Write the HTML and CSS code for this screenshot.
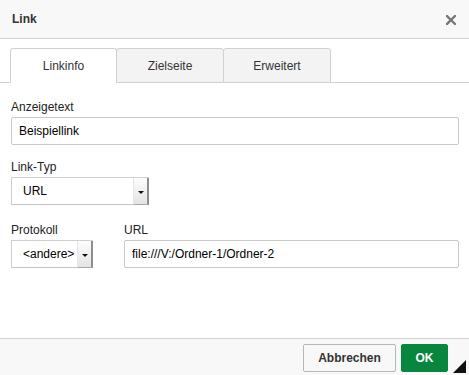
FILE: index.html
```html
<!DOCTYPE html>
<html>
<head>
<meta charset="utf-8">
<title>Link</title>
<link rel="stylesheet" href="styles.css">
</head>
<body>

<!-- ====================================================== -->
<div class="dialog">

<div class="dialog-head">
    <span class="dialog-title">Link</span>
    <span class="dialog-close">
        <svg width="10" height="10" viewBox="0 0 10 10">
            <path d="M1 1 L9 9 M9 1 L1 9" stroke="#777" stroke-width="2.4" stroke-linecap="square"/>
        </svg>
    </span>
</div>

<!-- ====================================================== -->
<div class="tab-bar">
    <div class="tab tab-active">Linkinfo</div>
    <div class="tab">Zielseite</div>
    <div class="tab">Erweitert</div>
</div>

<!-- ====================================================== -->
<div class="dialog-body">

    <div class="field field-first">
        <div class="field-label">Anzeigetext</div>
        <div class="text-input text-input-full">Beispiellink</div>
    </div>

    <div class="field">
        <div class="field-label">Link-Typ</div>
        <div class="select select-type">
            <span class="select-value">URL</span>
            <span class="select-arrow"><span class="arrow-tri"></span></span>
        </div>
    </div>

    <div class="field-row">
        <div class="field field-proto">
            <div class="field-label">Protokoll</div>
            <div class="select select-proto">
                <span class="select-value">&lt;andere&gt;</span>
                <span class="select-arrow"><span class="arrow-tri"></span></span>
            </div>
        </div>
        <div class="field field-url">
            <div class="field-label">URL</div>
            <div class="text-input">file:///V:/Ordner-1/Ordner-2</div>
        </div>
    </div>

</div>

<!-- ====================================================== -->
<div class="dialog-foot">
    <span class="button button-cancel">Abbrechen</span>
    <span class="button button-ok">OK</span>
    <span class="resizer"></span>
</div>

</div>

</body>
</html>
```

FILE: styles.css
```css
/*-----------------------------------------------------------------*/
body {
    margin:             0;
    font-family:        "Liberation Sans", Arial, sans-serif;
    font-size:          12px;
    color:              #222;
    background:         #fff;
}

/*-----------------------------------------------------------------*/
.dialog {
    width:              469px;
    height:             375px;
    display:            flex;
    flex-direction:     column;
    background:         #fff;
}

/*-----------------------------------------------------------------*/
.dialog-head {
    height:             38px;
    display:            flex;
    align-items:        center;
    justify-content:    space-between;
    padding:            0 13px 0 12px;
    background:         #f8f8f8;
    border-bottom:      1px solid #d1d1d1;
}

.dialog-title {
    font-weight:        bold;
    color:              #333;
}

.dialog-close {
    display:            flex;
    margin-top:         1px;
}

/*-----------------------------------------------------------------*/
.tab-bar {
    display:            flex;
    padding:            9px 0 0 10px;
    height:             34px;
    border-bottom:      1px solid #d1d1d1;
}

.tab {
    box-sizing:         border-box;
    width:              107px;
    height:             35px;
    margin-bottom:      -1px;
    display:            flex;
    align-items:        center;
    justify-content:    center;
    padding-top:        1px;
    color:              #333;
    background:         #f3f3f3;
    border:             1px solid #d1d1d1;
    border-radius:      3px 3px 0 0;
}

.tab + .tab {
    margin-left:        -1px;
    width:              108px;
}

.tab-active {
    background:         #fff;
    border-bottom-color: #fff;
    position:           relative;
}

/*-----------------------------------------------------------------*/
.dialog-body {
    flex:               1;
    padding:            0 10px 0 11px;
}

.field {
    margin-top:         15px;
}

.field-first {
    margin-top:         17px;
}

.field-label {
    line-height:        15px;
    margin-bottom:      2px;
}

.field-row {
    display:            flex;
    gap:                31px;
    margin-top:         3px;
}

.field-row .field {
    margin-top:         15px;
}

.field-url {
    flex:               1;
}

/*-----------------------------------------------------------------*/
.text-input {
    box-sizing:         border-box;
    height:             28px;
    line-height:        26px;
    padding:            0 7px;
    color:              #000;
    background:         #fff;
    border:             1px solid #c9c9c9;
    border-radius:      2px;
}

/*-----------------------------------------------------------------*/
.select {
    box-sizing:         border-box;
    height:             28px;
    display:            flex;
    color:              #000;
    background:         #fff;
    border:             1px solid #cfcfcf;
    border-right:       none;
    border-bottom:      1px solid #c4c4c4;
}

.select-type {
    width:              138px;
}

.select-proto {
    width:              82px;
}

.select-value {
    flex:               1;
    line-height:        26px;
    padding-left:       11px;
}

.select-arrow {
    width:              13px;
    display:            flex;
    align-items:        center;
    justify-content:    center;
    background:         linear-gradient(#fdfdfd, #e4e4e4);
    border-left:        1px solid #e6e6e6;
    border-right:       2px solid #8e8e8e;
    border-bottom:      1px solid #a8a8a8;
    margin-bottom:      -1px;
}

.arrow-tri {
    width:              0;
    height:             0;
    border-left:        3px solid transparent;
    border-right:       3px solid transparent;
    border-top:         3px solid #111;
    margin-top:         2px;
}

/*-----------------------------------------------------------------*/
.dialog-foot {
    position:           relative;
    height:             37px;
    display:            flex;
    justify-content:    flex-end;
    align-items:        flex-start;
    gap:                5px;
    padding:            5px 21px 0 0;
    box-sizing:         border-box;
    background:         #f8f8f8;
    border-top:         1px solid #d1d1d1;
}

.button {
    box-sizing:         border-box;
    height:             28px;
    display:            flex;
    align-items:        center;
    justify-content:    center;
    font-weight:        bold;
    border-radius:      2px;
}

.button-cancel {
    width:              93px;
    color:              #333;
    background:         #f8f8f8;
    border:             1px solid #b6b6b6;
}

.button-ok {
    width:              47px;
    color:              #fff;
    background:         #09863e;
    border:             1px solid #09863e;
}

.resizer {
    position:           absolute;
    right:              3px;
    bottom:             2px;
    width:              0;
    height:             0;
    border-left:        13px solid transparent;
    border-bottom:      13px solid #111;
}
```
